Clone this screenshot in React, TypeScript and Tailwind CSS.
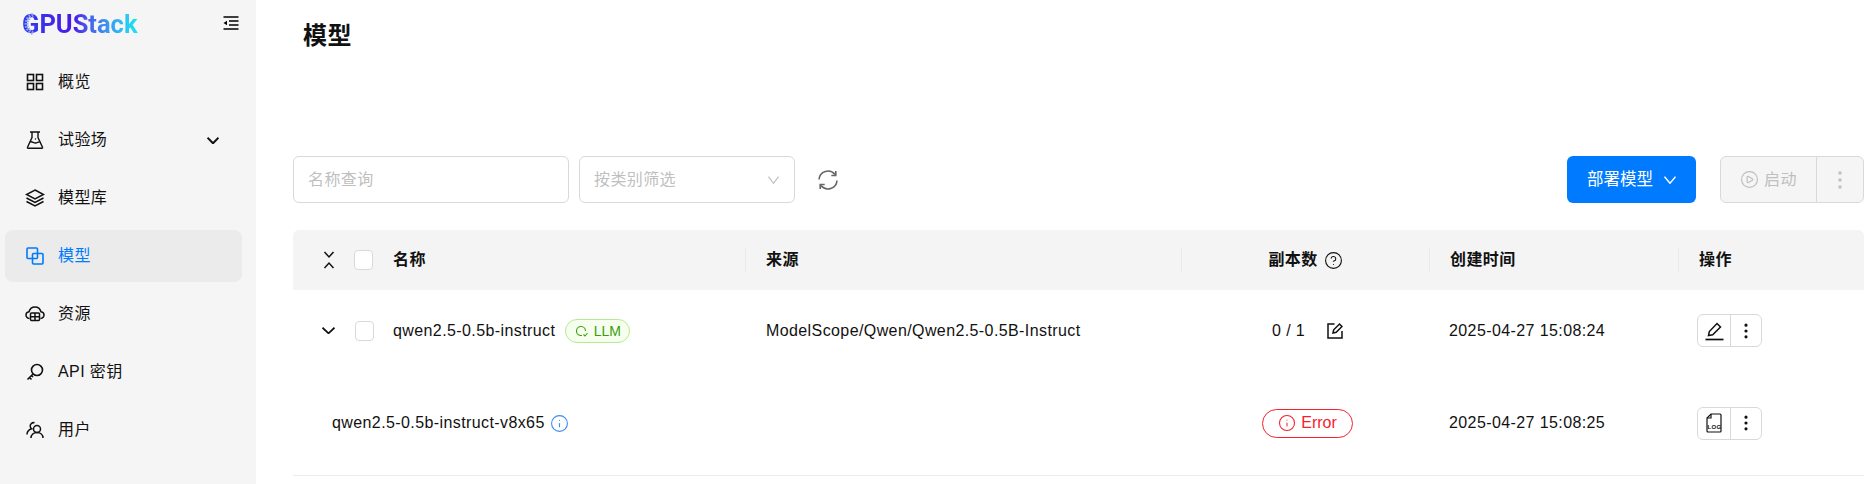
import { Info, CircleHelp, CirclePlay, EllipsisVertical } from "lucide-react";

const font = "font-['Liberation_Sans','Noto_Sans_CJK_SC',sans-serif] tracking-[0.4px]";

function Chevron({ w = 11, h = 8, sw = 1.2, className = "" }: { w?: number; h?: number; sw?: number; className?: string }) {
    return (
        <svg width={w} height={h} viewBox={`0 0 ${w} ${h}`} fill="none" stroke="currentColor" strokeWidth={sw} className={className}>
            <path d={`M0.5 0.7L${w / 2} ${h - 0.7}L${w - 0.5} 0.7`} />
        </svg>
    );
}

function GridIcon() {
    return (
        <svg width="18" height="18" viewBox="0 0 18 18" fill="none" stroke="currentColor" strokeWidth="1.6">
            <rect x="1.5" y="1.5" width="6" height="6" />
            <rect x="10.5" y="1.5" width="6" height="6" />
            <rect x="1.5" y="10.5" width="6" height="6" />
            <rect x="10.5" y="10.5" width="6" height="6" />
        </svg>
    );
}

function FlaskIcon() {
    return (
        <svg width="18" height="18" viewBox="0 0 18 18" fill="none" stroke="currentColor" strokeWidth="1.4">
            <path d="M4 1h10M6 1v5.500L1.500 16.300c-.2.400 0 .900.500.900h14c.5 0 .7-.5.500-.9L12 6.500V1" />
            <path d="M4 11c2-1.200 3.500 1.200 5.500 1s3-1.500 4.500-1" />
            <circle cx="9.500" cy="8" r="0.700" fill="currentColor" stroke="none" />
        </svg>
    );
}

function LayersIcon() {
    return (
        <svg width="20" height="18" viewBox="0 0 20 18" fill="none" stroke="currentColor" strokeWidth="1.5">
            <path d="M10 1l8.500 4.500L10 10 1.500 5.500z" />
            <path d="M1.500 9L10 13.500 18.500 9" />
            <path d="M1.500 12.500L10 17l8.500-4.500" />
        </svg>
    );
}

function ModelIcon() {
    return (
        <svg width="18" height="18" viewBox="0 0 18 18" fill="none" stroke="currentColor" strokeWidth="1.6">
            <rect x="1" y="1" width="10.500" height="10.500" rx="1" />
            <rect x="6.500" y="6.500" width="10.500" height="10.500" rx="1" />
        </svg>
    );
}

function CloudIcon() {
    return (
        <svg width="20" height="18" viewBox="0 0 20 18" fill="none" stroke="currentColor" strokeWidth="1.500">
            <path d="M4.500 13.500C2.500 13.200 1 11.800 1 10s1.500-3 3-3.200C4.800 4 7 2 10 2s5.200 2 6 4.800c1.600.2 3 1.400 3 3.200s-1.500 3.200-3.500 3.500" />
            <rect x="5.500" y="8" width="9" height="7.500" rx="1" />
            <path d="M5.500 11.700h9M10 8v7.500" />
        </svg>
    );
}

function KeyIcon() {
    return (
        <svg width="18" height="18" viewBox="0 0 18 18" fill="none" stroke="currentColor" strokeWidth="1.600">
            <circle cx="11" cy="7" r="5.500" />
            <path d="M7 11l-5.500 5.500M3.500 14.500l2 2M5.500 12.500l1.500 1.500" />
        </svg>
    );
}

function UsersIcon() {
    return (
        <svg width="18" height="18" viewBox="0 0 18 18" fill="none" stroke="currentColor" strokeWidth="1.500">
            <circle cx="11" cy="8" r="3.500" />
            <path d="M5 17c0-3.200 2.600-5.500 6-5.500s6 2.300 6 5.500" />
            <path d="M8.500 1.800A3.300 3.300 0 0 0 4.200 5c0 1.200.6 2.200 1.500 2.800C3 8.700 1 11 1 13.500" />
        </svg>
    );
}

function SideCollapseIcon() {
    return (
        <svg width="16" height="14" viewBox="0 0 16 14" fill="none" stroke="currentColor" strokeWidth="1.300">
            <path d="M0.500 1h15M0.500 13h15M6 5h9.500M6 9h9.500" />
            <path d="M0.500 7L4 4.800v4.400z" fill="currentColor" stroke="none" />
        </svg>
    );
}

function CollapseAllIcon() {
    return (
        <svg width="14" height="20" viewBox="0 0 14 20" fill="none" stroke="#111" strokeWidth="1.500">
            <path d="M2.500 2l4.500 5 4.500-5M2.500 18l4.500-5 4.500 5" />
        </svg>
    );
}

function SyncIcon() {
    return (
        <svg width="22" height="22" viewBox="0 0 22 22" fill="none" stroke="#666" strokeWidth="1.600">
            <path d="M2 10.500A9 9 0 0 1 18 5.500" />
            <path d="M20 11.500A9 9 0 0 1 4 16.500" />
            <path d="M18.800 2v4.500h-4.500" />
            <path d="M3.200 20v-4.500h4.500" />
        </svg>
    );
}

function EditIcon() {
    return (
        <svg width="16" height="17" viewBox="0 0 16 17" fill="none" stroke="#111" strokeWidth="1.500" className="ml-[22px]">
            <path d="M7.500 2H1v14h14V9" />
            <path d="M6 11l.7-3.200L12.500 2l2.500 2.500-5.800 5.800z" />
        </svg>
    );
}

function PenIcon() {
    return (
        <svg width="19" height="20" viewBox="0 0 19 20" fill="none" stroke="#111" strokeWidth="1.500">
            <path d="M3.500 14.500l.8-4L12 2.500l3.500 3.500-7.800 7.800z" />
            <path d="M0.500 18.500h18" strokeWidth="1.700" />
        </svg>
    );
}

function LogFileIcon() {
    return (
        <svg width="18" height="20" viewBox="0 0 18 20" fill="none" stroke="#111" strokeWidth="1.200">
            <path d="M6 1h9a1 1 0 0 1 1 1v16a1 1 0 0 1-1 1H3a1 1 0 0 1-1-1V5z" />
            <path d="M6 1v4H2" />
            <text x="9.500" y="15.500" fontSize="6" textAnchor="middle" fill="#111" stroke="none" fontFamily="Liberation Sans" fontWeight="700">LOG</text>
        </svg>
    );
}

function LlmIcon() {
    return (
        <svg width="14" height="14" viewBox="0 0 14 14" fill="none" stroke="currentColor" strokeWidth="1.100">
            <path d="M7 11.500H5.500a4.500 4.500 0 1 1 5-4.500" />
            <path d="M8.500 10.500l1.500 1.500 2.500-3" />
        </svg>
    );
}

function Logo() {
    return (
        <div className="relative w-fit">
            <span className="bg-gradient-to-r from-[#2b3cf0] via-[#4a14e8] via-45% to-[#10e8f0] bg-clip-text font-['Roboto',sans-serif] text-[25.5px] font-bold leading-[30px] tracking-normal text-transparent">
                GPUStack
            </span>
            <svg className="absolute left-[-1px] top-[3px]" width="14" height="24" viewBox="0 0 14 24" fill="none">
                <path d="M12 3A9.500 9.500 0 0 0 12 21" stroke="#8ea0e8" strokeWidth="4" strokeDasharray="1.500 1.200" />
            </svg>
        </div>
    );
}

const menu = [
    { label: "概览", icon: <GridIcon /> },
    { label: "试验场", icon: <FlaskIcon />, arrow: true },
    { label: "模型库", icon: <LayersIcon /> },
    { label: "模型", icon: <ModelIcon />, active: true },
    { label: "资源", icon: <CloudIcon /> },
    { label: "API 密钥", icon: <KeyIcon /> },
    { label: "用户", icon: <UsersIcon /> },
];

function Sidebar() {
    return (
        <aside className="flex w-[256px] shrink-0 flex-col bg-[#f5f5f5]">
            <div className="flex h-[56px] items-start justify-between pl-[22px] pr-[17px] pt-[9px]">
                <Logo />
                <div className="pt-[7px] text-black">
                    <SideCollapseIcon />
                </div>
            </div>
            <nav className="ml-[5px] flex w-[237px] flex-col gap-[6px]">
                {menu.map((item) => (
                    <div
                        key={item.label}
                        className={`flex h-[52px] items-center rounded-lg pr-[23px] ${item.active ? "bg-[#ebebeb] text-[#007aff]" : "text-[#111]"}`}
                    >
                        <span className="flex w-[53px] justify-center pl-[6px]">{item.icon}</span>
                        <span className="text-base">{item.label}</span>
                        {item.arrow && <Chevron w={12} h={7} sw={2} className="ml-auto" />}
                    </div>
                ))}
            </nav>
        </aside>
    );
}

function Toolbar() {
    return (
        <div className="flex h-[47px] items-stretch">
            <input
                placeholder="名称查询"
                className="w-[276px] rounded-md border border-[#d9d9d9] px-[14px] text-base placeholder:text-[#bfbfbf]"
            />
            <div className="ml-[10px] flex w-[216px] items-center justify-between rounded-md border border-[#d9d9d9] pl-[14px] pr-[15px] text-base text-[#bfbfbf]">
                按类别筛选
                <Chevron />
            </div>
            <div className="ml-[22px] flex items-center">
                <SyncIcon />
            </div>
            <button className="ml-auto flex w-[129px] items-center justify-center gap-[11px] rounded-md bg-[#007aff] text-[16.5px] tracking-normal text-white">
                部署模型
                <Chevron w={12} sw={1.4} />
            </button>
            <div className="ml-[24px] flex w-[144px] rounded-md border border-[#d9d9d9] bg-[#f5f5f5] text-base text-[#bfbfbf]">
                <div className="flex w-[96px] items-center justify-center gap-[5px] border-r border-[#d9d9d9]">
                    <CirclePlay size={19} strokeWidth={1.500} />
                    启动
                </div>
                <div className="flex flex-1 items-center justify-center">
                    <EllipsisVertical size={24} strokeWidth={1.500} />
                </div>
            </div>
        </div>
    );
}

function HeadCell({ children, center = false }: { children: React.ReactNode; center?: boolean }) {
    return (
        <div className="flex items-center">
            <span className="h-[25px] w-px bg-[#ebebeb]" />
            <div className={`flex items-center font-bold ${center ? "flex-1 justify-center" : "ml-[20px]"}`}>{children}</div>
        </div>
    );
}

function Checkbox() {
    return <span className="h-[20px] w-[19px] shrink-0 rounded-[4px] border border-[#d9d9d9] bg-white" />;
}

function ActionGroup({ icon }: { icon: React.ReactNode }) {
    return (
        <div className="flex h-[33px] w-[65px] rounded-md border border-[#d9d9d9] text-[#111]">
            <span className="flex w-[33px] items-center justify-center border-r border-[#d9d9d9]">{icon}</span>
            <span className="flex flex-1 items-center justify-center">
                <EllipsisVertical size={20} strokeWidth={1.800} />
            </span>
        </div>
    );
}

const cols = "grid grid-cols-[452px_436px_248px_249px_1fr]";

function ModelTable() {
    return (
        <div className="mt-[27px] text-base text-[#111]">
            <div className={`${cols} h-[60px] rounded-t-md bg-[#f4f4f4]`}>
                <div className="flex items-center pl-[29px]">
                    <CollapseAllIcon />
                    <span className="ml-[18px] mr-[20px] flex">
                        <Checkbox />
                    </span>
                    <span className="font-bold">名称</span>
                </div>
                <HeadCell>来源</HeadCell>
                <HeadCell center>
                    副本数
                    <CircleHelp size={19} strokeWidth={1.400} className="ml-[6px]" />
                </HeadCell>
                <HeadCell>创建时间</HeadCell>
                <HeadCell>操作</HeadCell>
            </div>

            <div className={`${cols} h-[81px] items-center`}>
                <div className="flex items-center pl-[29px]">
                    <Chevron w={13} h={7} sw={1.800} />
                    <span className="ml-[20px] mr-[19px] flex">
                        <Checkbox />
                    </span>
                    <span>qwen2.5-0.5b-instruct</span>
                    <span className="ml-[10px] flex h-[24px] w-[65px] items-center justify-center gap-[5px] rounded-full border border-[#b7eb8f] bg-[#f6ffed] text-sm tracking-normal text-[#389e0d]">
                        <LlmIcon />
                        LLM
                    </span>
                </div>
                <div className="pl-[21px]">ModelScope/Qwen/Qwen2.5-0.5B-Instruct</div>
                <div className="flex items-center pl-[91px]">
                    <span>0 / 1</span>
                    <EditIcon />
                </div>
                <div className="pl-[20px]">2025-04-27 15:08:24</div>
                <div className="pl-[19px]">
                    <ActionGroup icon={<PenIcon />} />
                </div>
            </div>

            <div className={`${cols} h-[105px] items-center border-b border-[#ebebeb]`}>
                <div className="flex items-center pl-[39px]">
                    <span>qwen2.5-0.5b-instruct-v8x65</span>
                    <Info size={19} strokeWidth={1.400} className="ml-[5px] text-[#3b8ef0]" />
                </div>
                <div />
                <div className="flex justify-center">
                    <span className="ml-[5px] flex h-[29px] w-[91px] items-center justify-center gap-[5px] rounded-full border border-[#f5222d] text-base tracking-normal text-[#f5222d]">
                        <Info size={18} strokeWidth={1.400} />
                        Error
                    </span>
                </div>
                <div className="pl-[20px]">2025-04-27 15:08:25</div>
                <div className="pl-[19px]">
                    <ActionGroup icon={<LogFileIcon />} />
                </div>
            </div>
        </div>
    );
}

export default function App() {
    return (
        <div className={`flex h-[484px] w-[1864px] overflow-hidden bg-white ${font}`}>
            <Sidebar />
            <main className="min-w-0 flex-1 pl-[37px]">
                <div className="flex h-[156px] items-start pl-[10px] pt-[20px]">
                    <h1 className="text-2xl font-bold leading-[32px] text-[#111]">模型</h1>
                </div>
                <Toolbar />
                <ModelTable />
            </main>
        </div>
    );
}
